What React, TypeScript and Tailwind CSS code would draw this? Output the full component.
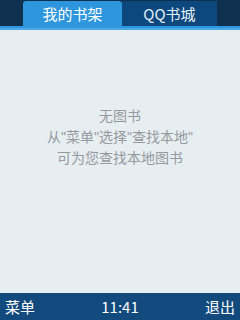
import React from 'react';

export default function App() {
  const font = { fontFamily: '"Noto Sans CJK SC", "Noto Sans", sans-serif' };
  const bodyFont = { fontFamily: '"Liberation Sans", "Noto Sans CJK SC", sans-serif' };

  return (
    <div className="w-[240px] h-[320px] flex flex-col bg-[#e7eef2] overflow-hidden" style={font}>
      {/* 顶部标签 */}
      <div className="h-[26px] bg-[#10304f] flex items-end pl-[23px]">
        <div className="w-[99px] h-[25px] bg-[#2e96dd] rounded-t-[3px] flex items-center justify-center text-white text-[15px] leading-none">
          我的书架
        </div>
        <div className="w-[95px] h-[25px] bg-[#0c477d] flex items-center justify-center text-[#e4eef7] text-[15px] leading-none">
          QQ书城
        </div>
      </div>
      <div className="h-[2px] bg-[#2f97de]" />
      <div className="h-[2px] bg-[#4ba8e6]" />

      {/* 内容 */}
      <div
        className="flex-1 flex flex-col items-center pt-[76px] text-[14px] leading-[21px] text-[#96999d]"
        style={bodyFont}
      >
        <p>无图书</p>
        <p>从"菜单"选择"查找本地"</p>
        <p>可为您查找本地图书</p>
      </div>

      {/* 底部栏 */}
      <div className="h-[27px] bg-[#134a7e] flex items-center justify-between px-[5px] text-white text-[15px] leading-none">
        <span>菜单</span>
        <span>11:41</span>
        <span>退出</span>
      </div>
    </div>
  );
}
